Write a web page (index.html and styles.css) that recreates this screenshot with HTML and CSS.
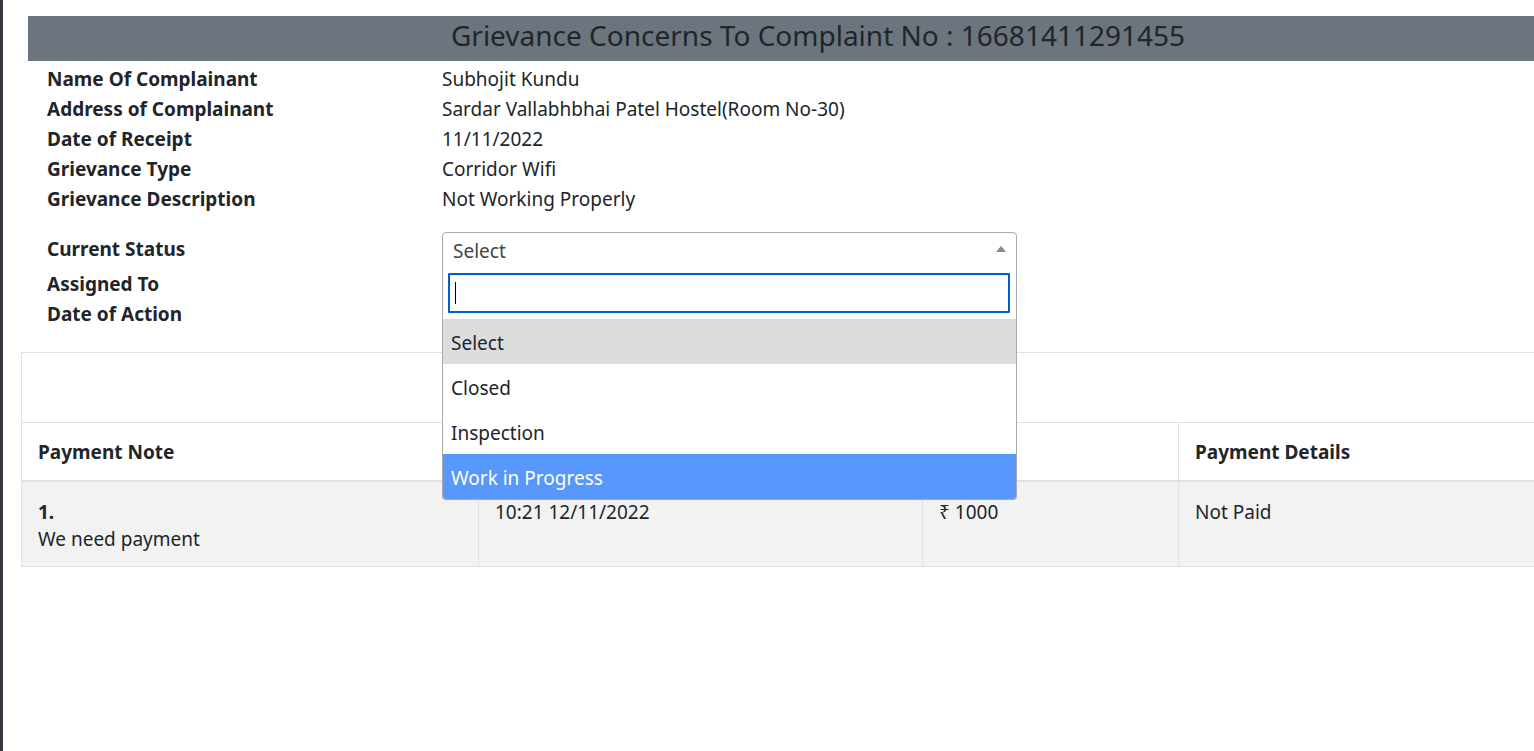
FILE: index.html
```html
<!DOCTYPE html>
<html>
<head>
<meta charset="utf-8">
<link rel="stylesheet" href="styles.css">
</head>
<body>
<div class="layout">
  <div class="strip"></div>
  <main class="main">
    <div class="title-bar">Grievance Concerns To Complaint No : 16681411291455</div>
    <div class="details">
      <div class="row"><div class="label">Name Of Complainant</div><div class="value">Subhojit Kundu</div></div>
      <div class="row"><div class="label">Address of Complainant</div><div class="value">Sardar Vallabhbhai Patel Hostel(Room No-30)</div></div>
      <div class="row"><div class="label">Date of Receipt</div><div class="value">11/11/2022</div></div>
      <div class="row"><div class="label">Grievance Type</div><div class="value">Corridor Wifi</div></div>
      <div class="row"><div class="label">Grievance Description</div><div class="value">Not Working Properly</div></div>
    </div>
    <div class="actions">
      <div class="row status-row">
        <div class="label">Current Status</div>
        <div class="value">
          <div class="select-wrap">
            <div class="select-box"><span>Select</span><span class="arrow"></span></div>
            <div class="dropdown">
              <div class="search"><div class="search-input"><span class="caret"></span></div></div>
              <ul class="options">
                <li class="opt selected">Select</li>
                <li class="opt">Closed</li>
                <li class="opt">Inspection</li>
                <li class="opt highlighted">Work in Progress</li>
              </ul>
            </div>
          </div>
        </div>
      </div>
      <div class="row"><div class="label">Assigned To</div><div class="value"></div></div>
      <div class="row"><div class="label">Date of Action</div><div class="value"></div></div>
    </div>
    <table class="pay-table">
      <colgroup>
        <col class="c1"><col class="c2"><col class="c3"><col class="c4">
      </colgroup>
      <thead>
        <tr class="blank-row"><th colspan="4"></th></tr>
        <tr class="head-row">
          <th>Payment Note</th>
          <th></th>
          <th></th>
          <th>Payment Details</th>
        </tr>
      </thead>
      <tbody>
        <tr class="body-row">
          <td><strong>1.</strong><br>We need payment</td>
          <td>10:21 12/11/2022</td>
          <td>₹ 1000</td>
          <td>Not Paid</td>
        </tr>
      </tbody>
    </table>
  </main>
</div>
</body>
</html>
```

FILE: styles.css
```css
html, body {
  margin: 0;
  padding: 0;
  background: #fff;
}
body {
  font-family: "Noto Sans", "Open Sans", sans-serif;
  color: #212529;
  font-size: 19px;
}
.layout {
  display: flex;
  min-height: 751px;
}
.strip {
  width: 3px;
  flex: none;
  background: #343a40;
}
.main {
  flex: 1;
  min-width: 0;
  padding-top: 16px;
  padding-left: 18px;
}
.title-bar {
  margin-left: 7px;
  height: 45px;
  background: #6c757d;
  color: #212529;
  font-size: 28px;
  line-height: 38px;
  text-align: center;
  padding-left: 74px;
  white-space: nowrap;
}
.details {
  margin-top: 3px;
  padding-left: 26px;
}
.row {
  display: grid;
  grid-template-columns: 395px 1fr;
  line-height: 30px;
}
.label {
  font-weight: 700;
}
.actions {
  margin-top: 18px;
  padding-left: 26px;
}
.status-row {
  height: 34px;
  line-height: 34px;
  margin-bottom: 3px;
}
.select-wrap {
  position: relative;
  width: 575px;
}
.select-box {
  box-sizing: border-box;
  height: 35px;
  border: 1px solid #aaa;
  border-radius: 4px 4px 0 0;
  padding-left: 10px;
  color: #444;
  font-size: 19px;
  line-height: 35px;
  display: flex;
  justify-content: space-between;
  align-items: center;
}
.select-box span:first-child {
  padding-top: 4px;
}
.arrow {
  width: 0;
  height: 0;
  border-left: 5px solid transparent;
  border-right: 5px solid transparent;
  border-bottom: 6px solid #888;
  margin-right: 10px;
  margin-top: -2px;
}
.dropdown {
  position: absolute;
  left: 0;
  top: 34px;
  width: 575px;
  box-sizing: border-box;
  border: 1px solid #aaa;
  border-top: none;
  border-radius: 0 0 4px 4px;
  background: #fff;
  z-index: 5;
  overflow: hidden;
}
.search {
  padding: 7px 6px 6px 5px;
}
.search-input {
  box-sizing: border-box;
  height: 40px;
  border: 2px solid #005fcc;
  border-radius: 1px;
  position: relative;
}
.caret {
  position: absolute;
  left: 5px;
  top: 7px;
  width: 1px;
  height: 22px;
  background: #000;
}
.options {
  list-style: none;
  margin: 0;
  padding: 0;
}
.opt {
  height: 45px;
  line-height: 48px;
  padding-left: 8px;
  font-size: 19px;
  color: #212529;
}
.opt.selected {
  background: #ddd;
}
.opt.highlighted {
  background: #5897fb;
  color: #fff;
}
.pay-table {
  margin-top: 23px;
  border-collapse: collapse;
  table-layout: fixed;
  width: 100%;
  border: 1px solid #dee2e6;
  border-right: none;
}
.c1 { width: 457px; }
.c2 { width: 444px; }
.c3 { width: 256px; }
.pay-table th, .pay-table td {
  text-align: left;
  vertical-align: top;
  padding: 0 16px;
}
.blank-row th {
  height: 69px;
  padding: 0;
  border-bottom: 1px solid #dee2e6;
}
.head-row th {
  height: 57px;
  vertical-align: middle;
  font-weight: 700;
  border-left: 1px solid #dee2e6;
  border-bottom: 2px solid #dee2e6;
}
.body-row td {
  background: #f2f2f2;
  border-left: 1px solid #dee2e6;
  border-bottom: 1px solid #dee2e6;
  padding-top: 17px;
  padding-bottom: 13px;
  line-height: 27px;
}
.body-row td strong {
  font-weight: 700;
}
```
